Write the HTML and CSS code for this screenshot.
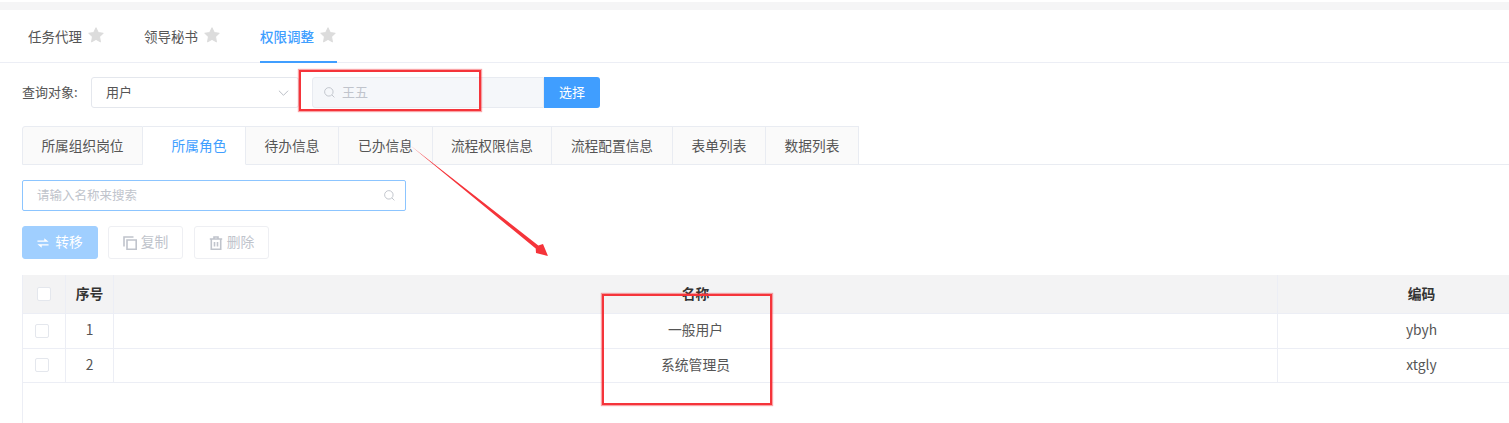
FILE: index.html
```html
<!DOCTYPE html>
<html lang="zh-CN">
<head>
<meta charset="utf-8">
<title>权限调整</title>
<link rel="stylesheet" href="styles.css">
</head>
<body>
<div class="page">
  <div class="topstrip"></div>
  <nav class="maintabs">
    <a class="maintab"><span>任务代理</span><svg class="star" viewBox="0 0 24 24"><path d="M12 2.500l2.900 6.300 6.600.8-4.900 4.600 1.300 6.800-5.900-3.400-5.900 3.400 1.300-6.800-4.900-4.600 6.600-.8z"/></svg></a>
    <a class="maintab"><span>领导秘书</span><svg class="star" viewBox="0 0 24 24"><path d="M12 2.500l2.900 6.300 6.600.8-4.900 4.600 1.300 6.800-5.900-3.400-5.900 3.400 1.300-6.800-4.900-4.600 6.600-.8z"/></svg></a>
    <a class="maintab active"><span>权限调整</span><svg class="star" viewBox="0 0 24 24"><path d="M12 2.500l2.900 6.300 6.600.8-4.900 4.600 1.300 6.800-5.900-3.400-5.900 3.400 1.300-6.800-4.900-4.600 6.600-.8z"/></svg></a>
  </nav>
  <div class="query">
    <label class="query-label">查询对象:</label>
    <div class="select"><span>用户</span><svg class="chev" viewBox="0 0 12 8"><path d="M1 1.500l5 5 5-5"/></svg></div>
    <div class="picker">
      <svg class="search-ico" viewBox="0 0 16 16"><circle cx="7.200" cy="7.200" r="5.200"/><path d="M11 11l3 3"/></svg>
      <span class="picker-text">王五</span>
    </div>
    <button class="choose">选择</button>
  </div>
  <div class="subtabs">
    <a class="subtab">所属组织岗位</a>
    <a class="subtab active">所属角色</a>
    <a class="subtab">待办信息</a>
    <a class="subtab">已办信息</a>
    <a class="subtab">流程权限信息</a>
    <a class="subtab">流程配置信息</a>
    <a class="subtab">表单列表</a>
    <a class="subtab">数据列表</a>
  </div>
  <div class="content">
    <div class="filter">
      <span class="filter-text">请输入名称来搜索</span>
      <svg class="search-ico" viewBox="0 0 16 16"><circle cx="7.200" cy="7.200" r="5.200"/><path d="M11 11l3 3"/></svg>
    </div>
    <div class="actions">
      <button class="btn primary"><svg class="btn-ico" viewBox="0 0 14 14"><path d="M.5 4h8V1.500l5 4H.5zM13.500 8.500H.5l5 4V10h8z"/></svg><span>转移</span></button>
      <button class="btn"><svg class="btn-ico" viewBox="0 0 14 14"><path d="M1 10.500V1h9.500M4 4h9.200v9.200H4z"/></svg><span>复制</span></button>
      <button class="btn"><svg class="btn-ico" viewBox="0 0 14 14"><path d="M.8 3h12.400M5 3V1h4v2M2.300 3v10.200h9.400V3M5.500 6v4.500M8.500 6v4.500"/></svg><span>删除</span></button>
    </div>
    <div class="grid-wrap">
      <table class="grid">
        <colgroup><col class="c-check"><col class="c-no"><col class="c-name"><col class="c-code"></colgroup>
        <thead>
          <tr><th class="head-check"><span class="check"></span></th><th>序号</th><th class="name-head">名称</th><th>编码</th></tr>
        </thead>
        <tbody>
          <tr><td class="row-check"><span class="check"></span></td><td>1</td><td>一般用户</td><td>ybyh</td></tr>
          <tr><td class="row-check"><span class="check"></span></td><td>2</td><td>系统管理员</td><td>xtgly</td></tr>
        </tbody>
      </table>
    </div>
  </div>
  <div class="mark mark-search"></div>
  <div class="mark mark-name"></div>
  <svg class="arrow" viewBox="0 0 150 120"><path d="M1 1L128.300 100.400L133 99L138 111L126 108L125.700 103.600Z"/></svg>
</div>
</body>
</html>
```
FILE: styles.css
```css
* { box-sizing: border-box; }
html, body { margin: 0; height: 100%; background: #fff; overflow: hidden; }
body { font-family: "Noto Sans CJK SC", "Noto Sans", sans-serif; font-size: 14px; color: #555; }
.page { position: relative; width: 1509px; height: 423px; overflow: hidden; padding-top: 2px; }
.topstrip { height: 8px; background: #f5f5f6; }

.maintabs { display: flex; height: 53px; padding-left: 28px; gap: 39px; border-bottom: 1px solid #eceef5; }
.maintab { display: flex; align-items: center; gap: 6px; height: 53px; width: 77px; color: #555; white-space: nowrap; font-size: 13.500px; border-bottom: 2px solid transparent; }
.maintab.active { color: #409eff; font-weight: 500; border-bottom-color: #409eff; }
.star { width: 18px; height: 18px; fill: #dcdcdc; stroke: #dcdcdc; stroke-width: 1.500; stroke-linejoin: round; margin: -1px 0 0 -1px; flex: none; }

.query { display: flex; align-items: center; height: 31px; margin: 14px 0 0 22px; }
.query-label { width: 69px; padding-bottom: 2px; color: #555; font-size: 13px; white-space: nowrap; }
.select { display: flex; align-items: center; justify-content: space-between; width: 208px; height: 31px; padding: 0 9px 2px 14px; border: 1px solid #e4e7ed; border-radius: 3px; color: #555; font-size: 13px; }
.chev { width: 11px; height: 8px; fill: none; stroke: #b4b8c0; stroke-width: 1; margin-top: 2px; }
.picker { display: flex; align-items: center; gap: 6px; width: 232px; height: 31px; margin-left: 13px; padding: 0 0 2px 10px; background: #f5f7fa; border: 1px solid #e8ebf1; border-radius: 3px 0 0 3px; color: #c0c4cc; font-size: 13px; }
.search-ico { width: 13px; height: 13px; fill: none; stroke: #c0c4cc; stroke-width: 1.200; flex: none; margin-top: 2px; }
.choose { width: 56px; height: 31px; padding: 0 0 2px; border: 0; border-radius: 0 3px 3px 0; background: #409eff; color: #fff; font: inherit; font-size: 13px; }

.subtabs { display: grid; grid-template-columns: 121px 103px 93px 94px 119px 121px 93px 93px; width: 1487px; height: 39px; margin: 18px 0 0 22px; position: relative; }
.subtabs::after { content: ""; position: absolute; left: 837px; right: -22px; bottom: 0; border-bottom: 1px solid #e9ecf2; }
.subtab { display: flex; align-items: center; justify-content: center; height: 39px; padding-bottom: 2px; background: #fafafa; color: #555; font-size: 13.700px; white-space: nowrap; border: 1px solid #e9ecf2; border-left: 0; }
.subtab:first-child { border-left: 1px solid #e9ecf2; border-top-left-radius: 3px; }
.subtab.active { background: #fff; color: #409eff; border-bottom-color: #fff; padding-left: 10px; }

.content { padding: 15px 0 0 22px; }
.filter { display: flex; align-items: center; justify-content: space-between; width: 384px; height: 31px; padding: 0 9px 3px 14px; border: 1px solid #8cc5ff; border-radius: 2px; color: #c0c4cc; font-size: 12.500px; }
.actions { display: flex; gap: 11px; margin-top: 15px; }
.btn { display: flex; align-items: center; justify-content: center; gap: 4px; width: 75px; height: 33px; padding: 0 0 3px; background: #fff; border: 1px solid #eeeff3; border-radius: 3px; color: #c0c4cc; font: inherit; font-size: 13.800px; }
.btn.primary { width: 76px; margin-right: -1px; gap: 6px; background: #a0cfff; border-color: #a0cfff; color: #fff; }
.btn-ico { width: 14px; height: 14px; fill: none; stroke: currentColor; stroke-width: 1.600; margin-top: 3px; }
.btn.primary .btn-ico { width: 12px; height: 12px; fill: #fff; stroke: none; }

.grid-wrap { height: 148px; margin-top: 16px; border-left: 1px solid #eceef5; }
.grid { width: 1542px; table-layout: fixed; border-collapse: collapse; }
.c-check { width: 42px; }
.c-no { width: 48px; }
.c-name { width: 1164px; }
.c-code { width: 288px; }
.grid th { height: 38px; background: #f3f3f4; color: #333; font-weight: 700; font-size: 13.800px; border-right: 1px solid #eceef5; border-bottom: 1px solid #eceef5; padding: 0 0 2px 1px; }
.grid td { height: 34px; text-align: center; color: #555; font-size: 13.800px; border-right: 1px solid #eceef5; border-bottom: 1px solid #eceef5; padding: 0 0 3px 1px; }
.grid tbody tr:first-child td { height: 35px; }
.grid .row-check, .grid .head-check { padding: 0; }
.check { display: block; width: 14px; height: 14px; background: #fff; border: 1px solid #e4e7ed; border-radius: 2px; }
.head-check .check { margin: 1px 0 0 14px; }
.row-check .check { margin-left: 12px; }

.mark { position: absolute; border: 2px solid #f5343a; box-shadow: 0 0 1px 1px rgba(245, 52, 58, .45); }
.mark-search { left: 299px; top: 70px; width: 182px; height: 41px; }
.mark-name { left: 602px; top: 294px; width: 170px; height: 111px; }
.arrow { position: absolute; left: 410px; top: 145px; width: 150px; height: 120px; fill: #f5343a; }
```
